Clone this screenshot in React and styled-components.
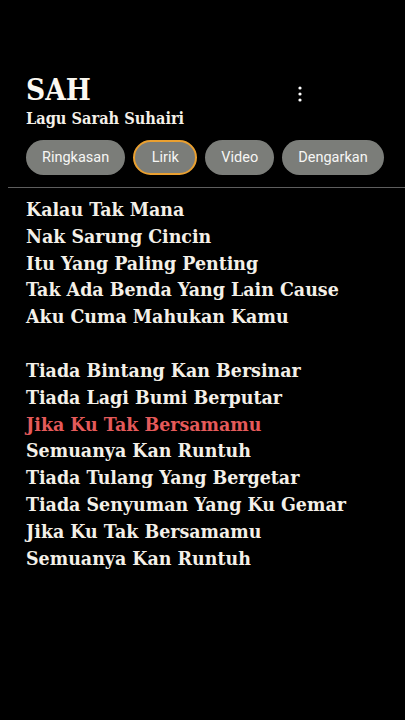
import React from 'react';
import styled, { createGlobalStyle } from 'styled-components';

const GlobalStyle = createGlobalStyle`
    html, body {
        margin: 0;
        padding: 0;
        background: #000;
    }
    #root {
        min-height: 720px;
        background: #000;
    }
`;

const stanzas = [
    [
        'Kalau Tak Mana',
        'Nak Sarung Cincin',
        'Itu Yang Paling Penting',
        'Tak Ada Benda Yang Lain Cause',
        'Aku Cuma Mahukan Kamu',
    ],
    [
        'Tiada Bintang Kan Bersinar',
        'Tiada Lagi Bumi Berputar',
        { text: 'Jika Ku Tak Bersamamu', active: true },
        'Semuanya Kan Runtuh',
        'Tiada Tulang Yang Bergetar',
        'Tiada Senyuman Yang Ku Gemar',
        'Jika Ku Tak Bersamamu',
        'Semuanya Kan Runtuh',
    ],
];

const tabs = ['Ringkasan', 'Lirik', 'Video', 'Dengarkan'];

const App = () => {
    return (
        <Screen>
            <GlobalStyle />
            <Header>
                <TitleBlock>
                    <Title>SAH</Title>
                    <Subtitle>Lagu Sarah Suhairi</Subtitle>
                </TitleBlock>
                <MoreButton aria-label="more">
                    <svg width="4" height="16" viewBox="0 0 4 16">
                        <circle cx="2" cy="2" r="1.6" fill="#fff" />
                        <circle cx="2" cy="8" r="1.6" fill="#fff" />
                        <circle cx="2" cy="14" r="1.6" fill="#fff" />
                    </svg>
                </MoreButton>
            </Header>
            <Tabs>
                {tabs.map((t) => (
                    <Chip key={t} $selected={t === 'Lirik'}>{t}</Chip>
                ))}
            </Tabs>
            <Divider />
            <Lyrics>
                {stanzas.map((stanza, i) => (
                    <Stanza key={i}>
                        {stanza.map((line, j) => {
                            const l = typeof line === 'string' ? { text: line } : line;
                            return <Line key={j} $active={l.active}>{l.text}</Line>;
                        })}
                    </Stanza>
                ))}
            </Lyrics>
        </Screen>
    );
};

const serif = `"DejaVu Serif", serif`;

const Screen = styled.div`
    width: 405px;
    height: 720px;
    background: #000;
    color: #f4f0e8;
    overflow: hidden;
    padding-top: 72px;
    box-sizing: border-box;
`;

const Header = styled.div`
    display: flex;
    align-items: flex-start;
    padding: 0 26px;
`;

const TitleBlock = styled.div`
    width: 272px;
`;

const Title = styled.h1`
    margin: 0;
    font-family: ${serif};
    font-stretch: condensed;
    font-weight: bold;
    font-size: 29.5px;
    line-height: 36px;
    color: #fbf8f0;
`;

const Subtitle = styled.p`
    margin: 0;
    font-family: ${serif};
    font-stretch: condensed;
    font-weight: bold;
    font-size: 16.2px;
    line-height: 22px;
    color: #f4f0e8;
`;

const MoreButton = styled.span`
    display: flex;
    padding-top: 14px;
`;

const Tabs = styled.div`
    display: flex;
    gap: 8px;
    padding: 10px 26px 0;
`;

const Chip = styled.div`
    height: 35px;
    box-sizing: border-box;
    padding: 0 ${(p) => (p.$selected ? 16.5 : 16)}px;
    border-radius: 18px;
    background: #7b7d79;
    border: ${(p) => (p.$selected ? '2px solid #eaa030' : 'none')};
    display: flex;
    align-items: center;
    font-family: Roboto, "Noto Sans", sans-serif;
    font-size: 14.5px;
    color: #f6f6f4;
`;

const Divider = styled.div`
    margin: 12px 0 0 8px;
    height: 1px;
    background: #5e5e5e;
`;

const Lyrics = styled.div`
    padding: 9px 26px 0;
    display: flex;
    flex-direction: column;
    gap: 27px;
`;

const Stanza = styled.div`
    display: flex;
    flex-direction: column;
`;

const Line = styled.div`
    font-family: ${serif};
    font-stretch: condensed;
    font-weight: bold;
    font-size: 19.4px;
    line-height: 26.8px;
    color: ${(p) => (p.$active ? '#e55a5a' : '#f4f0e8')};
    white-space: nowrap;
`;

export default App;
